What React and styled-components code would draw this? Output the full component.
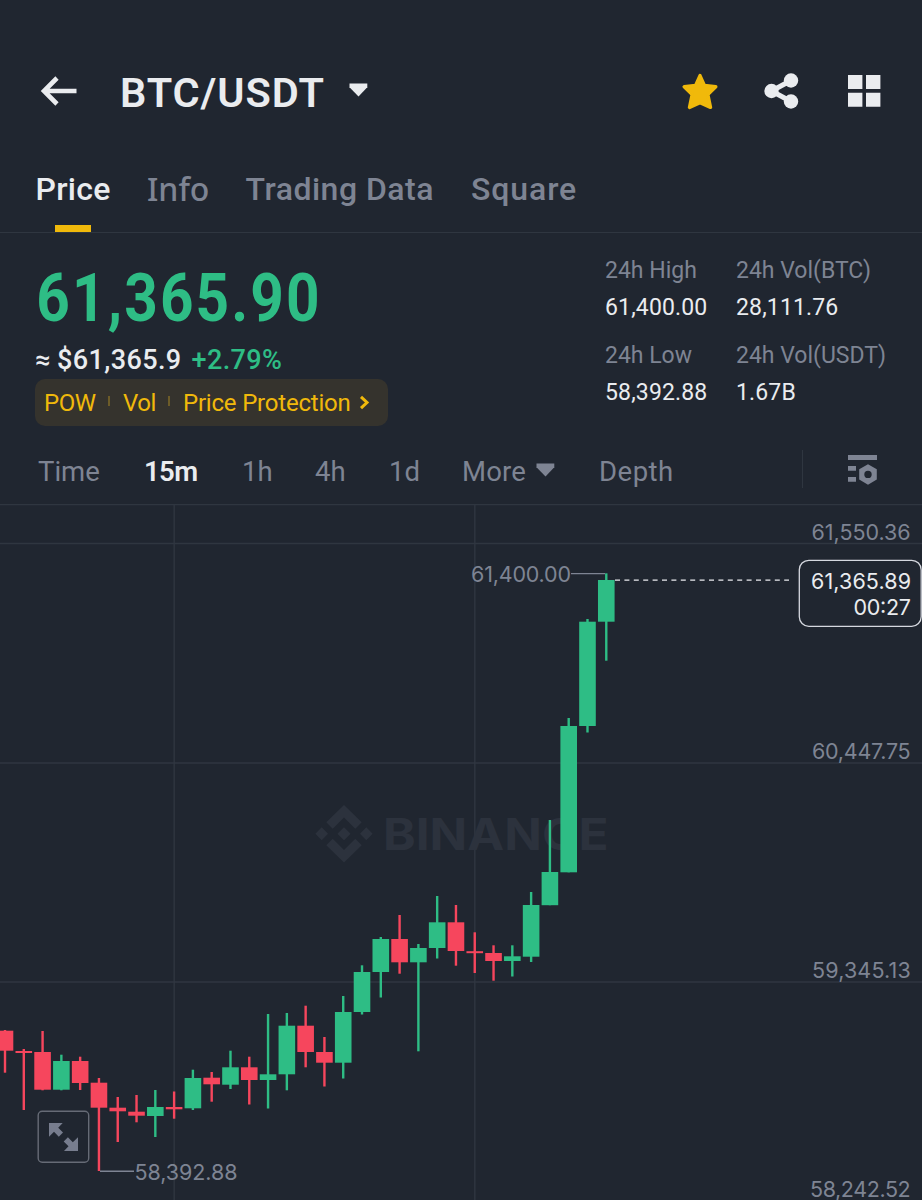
import React from "react";
import styled, { createGlobalStyle } from "styled-components";

const c = {
  bg: "#202630",
  line: "#2f3640",
  text: "#eaecef",
  muted: "#7e8493",
  green: "#2ebd85",
  red: "#f6465d",
  yellow: "#f0b90b",
  mark: "#2c323d",
};

const GlobalStyle = createGlobalStyle`
  * { box-sizing: border-box; }
  body { margin: 0; background: ${c.bg}; }
`;

const Screen = styled.main`
  width: 922px;
  height: 1200px;
  overflow: hidden;
  display: flex;
  flex-direction: column;
  background: ${c.bg};
  color: ${c.text};
  font-family: Roboto, "Liberation Sans", sans-serif;
  white-space: nowrap;
  svg { display: block; flex: none; }
`;

const Header = styled.header`
  height: 148px;
  padding: 34px 41px 0 40px;
  display: flex;
  align-items: center;
`;

const Title = styled.h1`
  margin: 3px 23px 0 43px;
  width: 206px;
  font-size: 41.5px;
  line-height: 48px;
  font-weight: 600;
  letter-spacing: 0.9px;
`;

const Actions = styled.div`
  margin-left: auto;
  display: flex;
  align-items: center;
  gap: 46px;
`;

const Tabs = styled.nav`
  height: 85px;
  padding-left: 35.5px;
  display: grid;
  grid-template-columns: 111.5px 98.5px 225.5px auto;
  border-bottom: 1.5px solid ${c.line};
`;

const Tab = styled.div`
  position: relative;
  justify-self: start;
  padding-top: 22px;
  font-family: ${(p) => p.$font || "inherit"};
  font-size: 32px;
  line-height: 38px;
  font-weight: 500;
  letter-spacing: ${(p) => p.$spacing || 0}px;
  color: ${(p) => (p.$active ? c.text : c.muted)};
  &::after {
    content: "";
    display: ${(p) => (p.$active ? "block" : "none")};
    position: absolute;
    left: 19.5px;
    bottom: 0;
    width: 36px;
    height: 7px;
    background: ${c.yellow};
  }
`;

const Summary = styled.section`
  height: 204px;
  padding: 23px 0 0 35px;
  display: flex;
`;

const PriceColumn = styled.div`
  width: 570px;
`;

const BigPrice = styled.div`
  height: 84px;
  padding-left: 1.5px;
  font-size: 66.5px;
  line-height: 84px;
  font-weight: 700;
  letter-spacing: 2.4px;
  color: ${c.green};
  transform: scaleX(0.88);
  transform-origin: 0 0;
`;

const Converted = styled.div`
  height: 39px;
  display: flex;
  font-size: 27px;
  line-height: 40px;
  font-weight: 500;
  letter-spacing: 0.4px;
`;

const Change = styled.span`
  margin-left: 10px;
  color: ${c.green};
`;

const Approx = styled.span`
  width: 22px;
`;

const TagBar = styled.div`
  width: 353px;
  height: 47px;
  padding-left: 9px;
  display: flex;
  align-items: center;
  border-radius: 10px;
  background: #35332d;
  color: ${c.yellow};
  font-size: 24px;
`;

const Tag = styled.span`
  width: ${(p) => p.$width}px;
  letter-spacing: ${(p) => p.$spacing}px;
`;

const TagDivider = styled.i`
  width: 2px;
  height: 10px;
  margin: 0 13px 4px 0;
  background: #6d5c28;
`;

const Stats = styled.div`
  display: grid;
  grid-template-columns: 131px auto;
  grid-auto-rows: 84.5px;
`;

const StatLabel = styled.div`
  font-size: 23px;
  line-height: 30px;
  letter-spacing: ${(p) => p.$spacing || 0}px;
  color: ${c.muted};
`;

const StatValue = styled.div`
  margin-top: 7px;
  font-size: 23px;
  line-height: 30px;
  letter-spacing: 0.15px;
`;

const Intervals = styled.nav`
  height: 67px;
  padding: 0 0 0 38px;
  display: flex;
  align-items: center;
  font-size: 27.5px;
  color: ${c.muted};
`;

const Interval = styled.div`
  width: ${(p) => p.$width}px;
  padding-top: 1px;
  display: flex;
  align-items: center;
  gap: 10px;
  font-weight: ${(p) => (p.$active ? 600 : 400)};
  letter-spacing: ${(p) => p.$spacing || 0}px;
  color: ${(p) => (p.$active ? c.text : "inherit")};
`;

const Rule = styled.i`
  width: 1px;
  height: 38px;
  margin: 0 45px 3px 0;
  background: ${c.line};
`;

const Chart = styled.svg`
  font-family: Inter, "Liberation Sans", sans-serif;
  font-size: 21.5px;
`;

const CaretDown = ({ fill }) => (
  <svg width="19" height="16" viewBox="0 0 19 16">
    <path d="M.5 .5H18.3V4.2L9.5 13.6.5 4.2Z" fill={fill} />
  </svg>
);

const BackIcon = () => (
  <svg width="37" height="30" viewBox="0 0 37 30">
    <path d="M36.5 15H4M17 2 4 15l13 13" fill="none" stroke={c.text} strokeWidth="4.6" />
  </svg>
);

const StarIcon = () => (
  <svg width="36" height="37" viewBox="0 0 36 37">
    <path
      d="M18 2.6 22.4 12.4 33.8 13.8 25.8 21.4 28.5 34.4 18 29.6 7.5 34.4 10.2 21.4 2.2 13.8 13.6 12.4Z"
      fill={c.yellow}
      stroke={c.yellow}
      strokeWidth="3.4"
      strokeLinejoin="round"
    />
  </svg>
);

const ShareIcon = () => (
  <svg width="38" height="36" viewBox="0 0 38 36">
    <path d="M27 7.5 7.500 18l19.500 10.500" fill="none" stroke={c.text} strokeWidth="5" />
    <circle cx="7.500" cy="18" r="7.2" fill={c.text} />
    <circle cx="27" cy="7.500" r="7.200" fill={c.text} />
    <circle cx="27" cy="28.500" r="7.200" fill={c.text} />
  </svg>
);

const GridIcon = () => (
  <svg width="33" height="32" viewBox="0 0 33 32" fill={c.text}>
    <path d="M0 0h14.400v14H0zM18 0h14.400v14H18zM0 17.700h14.400v14H0zM18 17.700h14.400v14H18z" />
  </svg>
);

const ChevronIcon = () => (
  <svg width="11" height="15" viewBox="0 0 11 15">
    <path d="m2 1.800 6 5.700-6 5.700" fill="none" stroke={c.yellow} strokeWidth="3" />
  </svg>
);

const SettingsIcon = () => (
  <svg width="30" height="32" viewBox="0 0 30 32" fill={c.muted}>
    <path d="M0 0h29v5H0zM0 11h8v4.700H0zM0 22h8v4.700H0z" />
    <path
      fillRule="evenodd"
      d="M20 9.200 28.800 14.200V24.600L20 29.700 11.200 24.600V14.200ZM20 15.700a3.700 3.700 0 1 0 0 7.400 3.700 3.700 0 0 0 0-7.400Z"
    />
  </svg>
);

// Each candle: direction, high, body top, body bottom, low (screen y)
const candles = [
  ["d", 1030, 1030.7, 1050.7, 1072.7],
  ["d", 1049, 1051, 1053, 1110],
  ["d", 1031, 1052, 1089.7, 1090.3],
  ["u", 1054.7, 1061, 1089.7, 1090.3],
  ["d", 1056.7, 1061, 1083, 1090],
  ["d", 1078, 1082.7, 1107.7, 1171],
  ["d", 1097, 1107.7, 1111.3, 1142],
  ["d", 1095, 1111.7, 1115.7, 1122.3],
  ["u", 1090, 1107, 1116, 1137],
  ["d", 1091.5, 1107, 1109.3, 1118.7],
  ["u", 1069.7, 1078, 1108.3, 1110],
  ["d", 1072, 1077.7, 1084.3, 1101.7],
  ["u", 1050.7, 1067.3, 1084.7, 1089],
  ["d", 1056.7, 1067.3, 1080, 1104.5],
  ["u", 1014, 1074.3, 1080, 1108.5],
  ["u", 1013, 1025.7, 1074.3, 1090.3],
  ["d", 1005.7, 1025.7, 1052, 1067.3],
  ["d", 1037, 1052, 1062.7, 1086.5],
  ["u", 996, 1012, 1062.7, 1078.5],
  ["u", 965.3, 972, 1012, 1014.5],
  ["u", 937, 939, 972, 997.5],
  ["d", 915, 939, 962.3, 973.7],
  ["u", 944, 948, 962.3, 1051.3],
  ["u", 896, 922.3, 948, 958.5],
  ["d", 905, 922.3, 951, 965.7],
  ["d", 932.3, 951.2, 953.2, 973],
  ["d", 945.3, 953, 961, 980.7],
  ["u", 945.3, 956.3, 961, 976.5],
  ["u", 892, 905, 956.7, 962],
  ["u", 820, 872, 905.2, 905.2],
  ["u", 718, 726, 872.3, 872.3],
  ["u", 619, 621.7, 726, 732.5],
  ["u", 573.3, 580, 621.7, 660.7],
];

const Candle = ({ x, data: [dir, high, top, bottom, low] }) => (
  <g fill={dir === "u" ? c.green : c.red}>
    <rect x={x - 1.2} y={high} width="2.4" height={low - high} />
    <rect x={x - 8.3} y={top} width="16.6" height={bottom - top} />
  </g>
);

const axis = [
  ["61,550.36", 812, 539.5],
  ["60,447.75", 812.5, 759],
  ["59,345.13", 812.5, 978],
  ["58,242.52", 810.5, 1197],
];

const CandleChart = () => (
  <Chart width="922" height="696" viewBox="0 504 922 696">
    <g fill="none" stroke={c.line} strokeWidth="1.4">
      <path d="M0 504.600H922M0 543.500H922M0 763H922M0 982H922M174.200 504V1200M474.800 504V1200" />
    </g>
    <g fill={c.mark}>
      <path d="M344 805 361.700 822.300 355.300 828.700 344 817.500 332.700 828.700 326.300 822.300Z" />
      <path d="M344 862.500 361.700 845.200 355.300 838.800 344 850 332.700 838.800 326.300 845.200Z" />
      <path d="m344 827.200 6.500 6.500-6.500 6.500-6.500-6.500zM321.700 827.200l6.300 6.500-6.300 6.500-6.300-6.500zM366.300 827.200l6.300 6.500-6.300 6.500-6.300-6.500z" />
      <text x="383" y="849.500" fontSize="44" fontWeight="700" textLength="225.5" lengthAdjust="spacingAndGlyphs">BINANCE</text>
    </g>
    {candles.map((d, i) => (
      <Candle key={i} x={5 + i * 18.79} data={d} />
    ))}
    <g fill="none" stroke={c.muted} strokeWidth="1.400">
      <path d="M571 573.600H605M100 1171.200H134" />
    </g>
    <path d="M615 580.200H789" stroke="#eaecef" strokeWidth="1.300" strokeDasharray="5 4.400" />
    <g fill={c.muted}>
      <text x="471" y="582.300" textLength="100">61,400.00</text>
      <text x="134.500" y="1180" textLength="103">58,392.88</text>
      {axis.map(([label, x, y]) => (
        <text key={label} x={x - 0.5} y={y} textLength={911.2 - x}>{label}</text>
      ))}
    </g>
    <rect x="799.300" y="560.300" width="121.900" height="66" rx="9.500" fill={c.bg} stroke="#d5d8df" strokeWidth="1.300" />
    <g fill={c.text} fontWeight="400">
      <text x="811" y="589" textLength="100">61,365.89</text>
      <text x="853.5" y="615" textLength="57.5">00:27</text>
    </g>
    <rect x="38.200" y="1111.300" width="50.500" height="51" rx="4" fill={c.bg} stroke="#666b76" strokeWidth="1.400" />
    <path
      d="M49 1123H62.700L58.200 1127.700 63 1132.600 58.800 1136.700 54 1131.700 49 1136.700ZM78 1151H64L68.500 1146.300 63.700 1141.500 67.900 1137.300 72.800 1142.200 78 1137.300Z"
      fill="#777d8e"
    />
  </Chart>
);

export default function App() {
  return (
    <Screen>
      <GlobalStyle />
      <Header>
        <BackIcon />
        <Title>BTC/USDT</Title>
        <CaretDown fill={c.text} />
        <Actions>
          <StarIcon />
          <ShareIcon />
          <GridIcon />
        </Actions>
      </Header>
      <Tabs>
        <Tab $active $spacing={0.3}>Price</Tab>
        <Tab $font='"Noto Sans", sans-serif'>Info</Tab>
        <Tab $spacing={0.5}>Trading Data</Tab>
        <Tab $spacing={0.9}>Square</Tab>
      </Tabs>
      <Summary>
        <PriceColumn>
          <BigPrice>61,365.90</BigPrice>
          <Converted>
            <Approx>≈</Approx>
            <span>$61,365.9</span>
            <Change>+2.79%</Change>
          </Converted>
          <TagBar>
            <Tag $width={64} $spacing={-0.4}>POW</Tag>
            <TagDivider />
            <Tag $width={45} $spacing={-0.5}>Vol</Tag>
            <TagDivider />
            <Tag $width={176} $spacing={-0.2}>Price Protection</Tag>
            <ChevronIcon />
          </TagBar>
        </PriceColumn>
        <Stats>
          <div>
            <StatLabel>24h High</StatLabel>
            <StatValue>61,400.00</StatValue>
          </div>
          <div>
            <StatLabel>24h Vol(BTC)</StatLabel>
            <StatValue>28,111.76</StatValue>
          </div>
          <div>
            <StatLabel>24h Low</StatLabel>
            <StatValue>58,392.88</StatValue>
          </div>
          <div>
            <StatLabel>24h Vol(USDT)</StatLabel>
            <StatValue>1.67B</StatValue>
          </div>
        </Stats>
      </Summary>
      <Intervals>
        <Interval $width={106}>Time</Interval>
        <Interval $width={98} $active $spacing={-0.6}>15m</Interval>
        <Interval $width={73}>1h</Interval>
        <Interval $width={74}>4h</Interval>
        <Interval $width={73}>1d</Interval>
        <Interval $width={137} $spacing={0.2}>
          More <CaretDown fill={c.muted} />
        </Interval>
        <Interval $width={203} $spacing={0.5}>Depth</Interval>
        <Rule />
        <SettingsIcon />
      </Intervals>
      <CandleChart />
    </Screen>
  );
}
